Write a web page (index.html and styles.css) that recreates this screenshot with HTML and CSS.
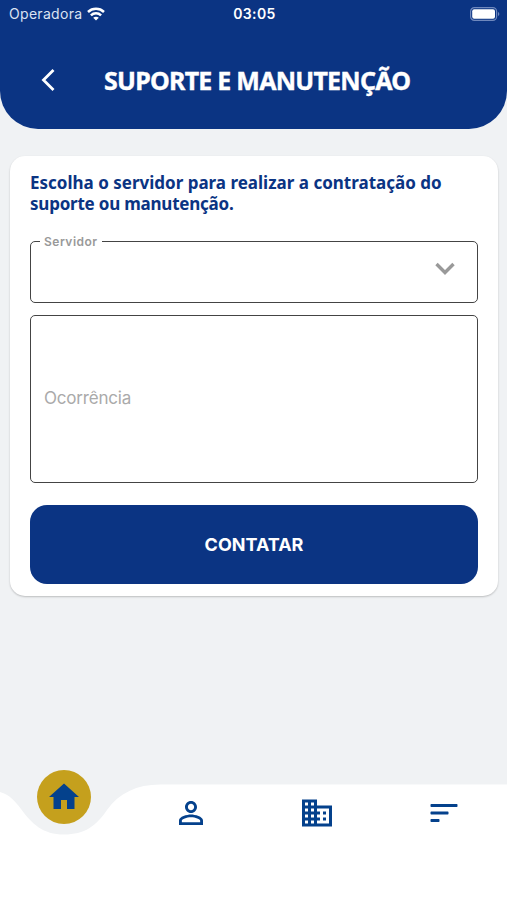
FILE: index.html
```html
<!DOCTYPE html>
<html lang="pt-BR">
<head>
    <meta charset="UTF-8">
    <meta name="viewport" content="width=device-width, initial-scale=1.0">
    <title>Suporte e Manutenção</title>
    <link rel="stylesheet" href="styles.css">
</head>
<body>
    <header class="header">
        <div class="status-bar">
            <div class="carrier">
                <span class="carrier-name">Operadora</span>
                <svg class="wifi" width="18" height="14" viewBox="0 0 18 14" fill="none" stroke="#fff" stroke-width="2.5">
                    <path d="M1 5C5.500.8 12.500.8 17 5"/>
                    <path d="M3.900 8.300c2.900-2.800 7.300-2.800 10.200 0"/>
                    <path d="M9 13.600 6.200 10.800C7.800 9.300 10.200 9.300 11.800 10.800Z" fill="#fff" stroke="none"/>
                </svg>
            </div>
            <span class="clock">03:05</span>
            <svg class="battery" width="30" height="14" viewBox="0 0 30 14">
                <rect x=".6" y=".6" width="26" height="12.800" rx="3.800" fill="none" stroke="#6f88bd" stroke-width="1.200"/>
                <rect x="2.200" y="2.200" width="22.800" height="9.600" rx="2" fill="#fff"/>
                <path d="M28 5v4c1.800-.7 1.800-3.300 0-4z" fill="#6f88bd"/>
            </svg>
        </div>
        <div class="title-bar">
            <svg class="back" width="16" height="24" viewBox="0 0 16 24" fill="none" stroke="#fff" stroke-width="2.800">
                <path d="M14.500 2 4.500 12l10 10"/>
            </svg>
            <h1>SUPORTE E MANUTENÇÃO</h1>
        </div>
    </header>

    <main class="card">
        <p class="intro">Escolha o servidor para realizar a contratação do<br><span class="intro-last">suporte ou manutenção.</span></p>
        <form id="supportForm">
            <div class="select-field">
                <label class="select-label">Servidor</label>
                <svg width="20" height="14" viewBox="0 0 20 14" fill="none" stroke="#999" stroke-width="3.400">
                    <path d="M1.500 2 10 10.500 18.500 2"/>
                </svg>
            </div>
            <div class="text-field">Ocorrência</div>
            <button type="button">CONTATAR</button>
        </form>
    </main>

    <nav class="tab-bar">
        <svg class="tab-shape" width="507" height="116" viewBox="0 0 507 116">
            <path d="M0 8C10 11 15 17 21 25C32 40 43 50.500 64 50.500C85 50.500 96 42 107 26C119 9 137 .5 160 .5H507V116H0Z" fill="#fff"/>
        </svg>
        <a class="tab">
            <span class="home-circle">
                <svg viewBox="0 0 24 24"><path d="M10 20v-6h4v6h5v-8h3L12 3 2 12h3v8z"/></svg>
            </span>
        </a>
        <a class="tab">
            <svg viewBox="0 0 24 24"><path d="M12 5.900c1.160 0 2.100.94 2.100 2.100s-.94 2.100-2.100 2.100S9.900 9.160 9.900 8s.94-2.100 2.100-2.100m0 9c2.970 0 6.100 1.460 6.100 2.100v1.100H5.900V17c0-.64 3.130-2.100 6.100-2.100M12 4C9.790 4 8 5.790 8 8s1.790 4 4 4 4-1.790 4-4-1.790-4-4-4zm0 9c-2.670 0-8 1.340-8 4v3h16v-3c0-2.660-5.330-4-8-4z"/></svg>
        </a>
        <a class="tab">
            <svg viewBox="0 0 24 24"><path d="M12 7V3H2v18h20V7H12zM6 19H4v-2h2v2zm0-4H4v-2h2v2zm0-4H4V9h2v2zm0-4H4V5h2v2zm4 12H8v-2h2v2zm0-4H8v-2h2v2zm0-4H8V9h2v2zm0-4H8V5h2v2zm10 12h-8v-2h2v-2h-2v-2h2v-2h-2V9h8v10zm-2-8h-2v2h2v-2zm0 4h-2v2h2v-2z"/></svg>
        </a>
        <a class="tab">
            <svg viewBox="0 0 24 24"><path d="M3.500 18h5a.5.5 0 0 0 .5-.5v-1a.5.5 0 0 0-.5-.5h-5a.5.5 0 0 0-.5.5v1a.5.5 0 0 0 .5.5zM3 6.500v1a.5.5 0 0 0 .5.5h17a.5.5 0 0 0 .5-.5v-1a.5.5 0 0 0-.5-.5h-17a.5.5 0 0 0-.5.5zM3.500 13h11a.5.5 0 0 0 .5-.5v-1a.5.5 0 0 0-.5-.5h-11a.5.5 0 0 0-.5.5v1a.5.5 0 0 0 .5.500z"/></svg>
        </a>
    </nav>
</body>
</html>
```
FILE: styles.css
```css
* {
    box-sizing: border-box;
}
body {
    margin: 0;
    height: 900px;
    display: flex;
    flex-direction: column;
    background-color: #f0f2f4;
    font-family: "Noto Sans", "Open Sans", sans-serif;
    overflow: hidden;
}
svg {
    display: block;
}
.header {
    height: 128.5px;
    background-color: #0b3483;
    color: white;
    border-radius: 0 0 38px 38px;
}
.status-bar {
    height: 27px;
    padding: 0 7px 0 9px;
    display: grid;
    grid-template-columns: 1fr auto 1fr;
    align-items: center;
    font-family: Inter, sans-serif;
    font-size: 14px;
}
.carrier {
    display: flex;
    align-items: center;
    gap: 5px;
    color: #dbe3f2;
}
.carrier-name {
    letter-spacing: 0.3px;
}
.clock {
    font-weight: 600;
    letter-spacing: 0.4px;
}
.battery {
    justify-self: end;
}
.title-bar {
    height: 106px;
    padding-left: 39px;
    display: flex;
    align-items: center;
}
h1 {
    margin: 0 0 0 49px;
    font-size: 25px;
    line-height: 32px;
    font-weight: 700;
    letter-spacing: -0.75px;
    white-space: nowrap;
    -webkit-text-stroke: 0.4px white;
}
.card {
    width: 488px;
    height: 440px;
    margin: 27px 0 0 10px;
    padding: 16px 20px 0;
    background-color: white;
    border-radius: 15px;
    box-shadow: 0 1px 2px rgba(0, 0, 0, 0.22);
}
.intro {
    margin: 0 0 27px;
    color: #0b3483;
    font-size: 17px;
    line-height: 21px;
    font-weight: 700;
    white-space: nowrap;
}
.intro-last {
    letter-spacing: -0.22px;
}
.select-field {
    position: relative;
    height: 62px;
    padding: 0 22px 5px 0;
    display: flex;
    align-items: center;
    justify-content: flex-end;
    border: 1.5px solid #444;
    border-radius: 5px;
}
.select-label {
    position: absolute;
    top: -8px;
    left: 9px;
    padding: 0 4px;
    background-color: white;
    color: #999;
    font-family: Inter, sans-serif;
    font-size: 12px;
    line-height: 16px;
    font-weight: 600;
    letter-spacing: 0.5px;
}
.text-field {
    height: 168px;
    margin-top: 12px;
    padding: 0 0 2px 13px;
    display: flex;
    align-items: center;
    border: 1.5px solid #444;
    border-radius: 5px;
    color: #aaa;
    font-family: Inter, sans-serif;
    font-size: 17px;
    letter-spacing: -0.2px;
}
button {
    width: 100%;
    height: 79px;
    margin-top: 22.5px;
    padding: 0;
    border: none;
    border-radius: 17px;
    background-color: #0b3483;
    color: white;
    font-family: Inter, sans-serif;
    font-size: 18px;
    font-weight: 700;
}
.tab-bar {
    position: relative;
    height: 116px;
    margin-top: auto;
    padding-left: 1px;
    display: grid;
    grid-template-columns: repeat(4, 1fr);
}
.tab-shape {
    position: absolute;
    top: 0;
    left: 0;
}
.tab {
    position: relative;
    height: 57px;
    display: flex;
    align-items: center;
    justify-content: center;
    fill: #04418c;
}
.tab svg {
    width: 36px;
    height: 36px;
}
/* active tab floats over the notch */
.home-circle {
    position: relative;
    top: -16px;
    width: 54px;
    height: 54px;
    display: flex;
    align-items: center;
    justify-content: center;
    border-radius: 50%;
    background-color: #c5a01d;
}
```
